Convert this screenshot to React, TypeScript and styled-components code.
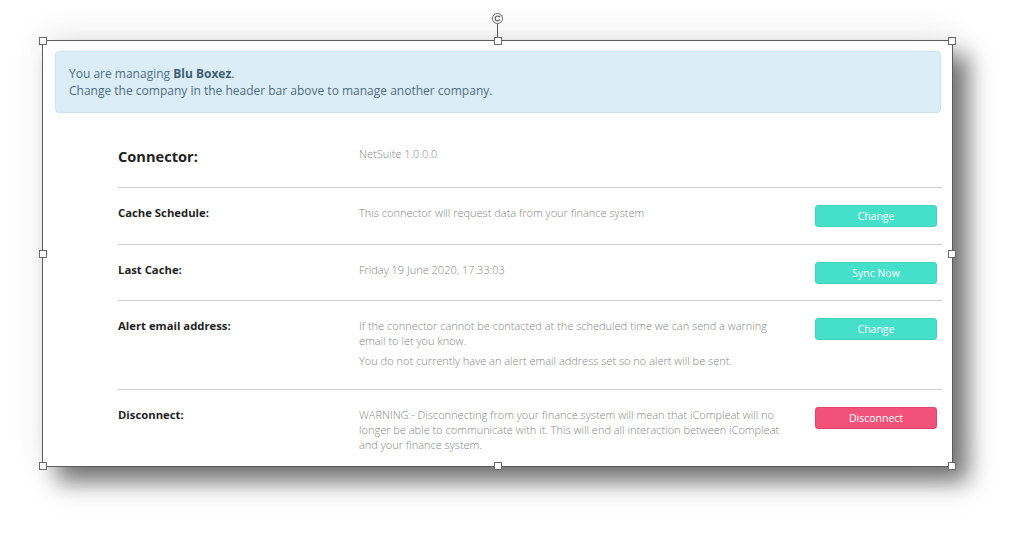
import styled, { createGlobalStyle } from "styled-components";

const GlobalStyle = createGlobalStyle`
  html, body {
    margin: 0;
    padding: 0;
    background: #ffffff;
  }
  body {
    font-family: "Open Sans", "Liberation Sans", sans-serif;
    overflow: hidden;
  }
`;

type Row = {
  label: string;
  lines: string[];
  action?: { text: string; danger?: boolean };
};

const rows: Row[] = [
  {
    label: "Cache Schedule:",
    lines: ["This connector will request data from your finance system"],
    action: { text: "Change" },
  },
  {
    label: "Last Cache:",
    lines: ["Friday 19 June 2020, 17:33:03"],
    action: { text: "Sync Now" },
  },
  {
    label: "Alert email address:",
    lines: [
      "If the connector cannot be contacted at the scheduled time we can send a warning email to let you know.",
      "You do not currently have an alert email address set so no alert will be sent.",
    ],
    action: { text: "Change" },
  },
  {
    label: "Disconnect:",
    lines: [
      "WARNING:- Disconnecting from your finance system will mean that iCompleat will no longer be able to communicate with it. This will end all interaction between iCompleat and your finance system.",
    ],
    action: { text: "Disconnect", danger: true },
  },
];

const handles: [string, string][] = [
  ["0%", "0%"],
  ["50%", "0%"],
  ["100%", "0%"],
  ["0%", "50%"],
  ["100%", "50%"],
  ["0%", "100%"],
  ["50%", "100%"],
  ["100%", "100%"],
];

const App = () => {
  return (
    <>
      <GlobalStyle />
      <Canvas>
        <Frame>
          <RotateHandle>
            <svg width="11" height="11" viewBox="0 0 11 11">
              <circle cx="5.5" cy="5.5" r="5" fill="#fff" stroke="#666" strokeWidth="1" />
              <path d="M7.6 4.2 A2.4 2.4 0 1 0 7.8 6.3" fill="none" stroke="#555" strokeWidth="1.1" />
              <path d="M6.4 3.2 L8.1 4.4 L8.3 2.6 Z" fill="#555" />
            </svg>
            <RotateStem />
          </RotateHandle>
          {handles.map(([x, y], i) => (
            <Handle key={i} $x={x} $y={y} />
          ))}
          <Shot>
            <Alert>
              You are managing <strong>Blu Boxez</strong>.
              <br />
              Change the company in the header bar above to manage another company.
            </Alert>
            <Table>
              <TableRow $first>
                <Label $big>Connector:</Label>
                <Value>
                  <p>NetSuite 1.0.0.0</p>
                </Value>
              </TableRow>
              {rows.map((r) => (
                <TableRow key={r.label}>
                  <Label>{r.label}</Label>
                  <Value>
                    {r.lines.map((l) => (
                      <p key={l}>{l}</p>
                    ))}
                  </Value>
                  {r.action && (
                    <ActionButton $danger={r.action.danger}>{r.action.text}</ActionButton>
                  )}
                </TableRow>
              ))}
            </Table>
          </Shot>
        </Frame>
      </Canvas>
    </>
  );
};

export default App;

const Canvas = styled.div`
  width: 1029px;
  height: 550px;
  box-sizing: border-box;
  padding: 40px 0 0 42px;
`;

const Frame = styled.div`
  position: relative;
  width: 911px;
  height: 427px;
  box-sizing: border-box;
  border: 1px solid #5c5c5c;
  background: #ffffff;
  box-shadow: 15px 15px 22px rgba(0, 0, 0, 0.55), 0 -6px 34px rgba(0, 0, 0, 0.07);
`;

const Shot = styled.div`
  width: 100%;
  height: 100%;
  overflow: hidden;
  background: #ffffff;
`;

const Handle = styled.div<{ $x: string; $y: string }>`
  position: absolute;
  left: ${({ $x }) => $x};
  top: ${({ $y }) => $y};
  width: 8px;
  height: 8px;
  box-sizing: border-box;
  margin: -4px 0 0 -4px;
  background: #ffffff;
  border: 1px solid #6a6a6a;
  z-index: 2;
`;

const RotateHandle = styled.div`
  position: absolute;
  left: 50%;
  top: -28px;
  margin-left: -6px;
  width: 11px;
  display: flex;
  flex-direction: column;
  align-items: center;
  z-index: 2;

  svg {
    display: block;
  }
`;

const RotateStem = styled.div`
  width: 1px;
  height: 13px;
  background: #555555;
`;

const Alert = styled.div`
  margin: 10px 11px 0 12px;
  padding: 13px 13px;
  background: #dbedf6;
  border: 1px solid #c7e3f1;
  border-radius: 4px;
  color: #4f6e84;
  font-size: 12px;
  line-height: 17px;

  strong {
    color: #3f5d73;
    font-weight: 700;
  }
`;

const Table = styled.div`
  margin: 0 10px 0 75px;
`;

const TableRow = styled.div<{ $first?: boolean }>`
  display: grid;
  grid-template-columns: 241px 1fr 122px;
  align-items: start;
  padding: ${({ $first }) => ($first ? "33px 5px 21px 0" : "17px 5px 16px 0")};
  border-top: ${({ $first }) => ($first ? "none" : "1px solid #cfcfcf")};
`;

const Label = styled.div<{ $big?: boolean }>`
  color: #1f1f1f;
  font-weight: 700;
  font-size: ${({ $big }) => ($big ? "14.6px" : "11.3px")};
  line-height: ${({ $big }) => ($big ? "20px" : "16px")};
`;

const Value = styled.div`
  padding-right: 28px;
  color: #868686;
  font-weight: 300;
  font-size: 11px;
  line-height: 15px;

  p {
    margin: 0 0 5px;
  }
`;

const ActionButton = styled.button<{ $danger?: boolean }>`
  width: 122px;
  height: 22px;
  margin: 0 0 0.5px;
  padding: 0;
  border: 1px solid ${({ $danger }) => ($danger ? "#e0466d" : "#3fd2bc")};
  border-radius: 3px;
  background: ${({ $danger }) => ($danger ? "#f2527a" : "#45e0ca")};
  color: #ffffff;
  font-family: "Open Sans", "Liberation Sans", sans-serif;
  font-size: 10.5px;
  line-height: 20px;
  cursor: pointer;
`;
